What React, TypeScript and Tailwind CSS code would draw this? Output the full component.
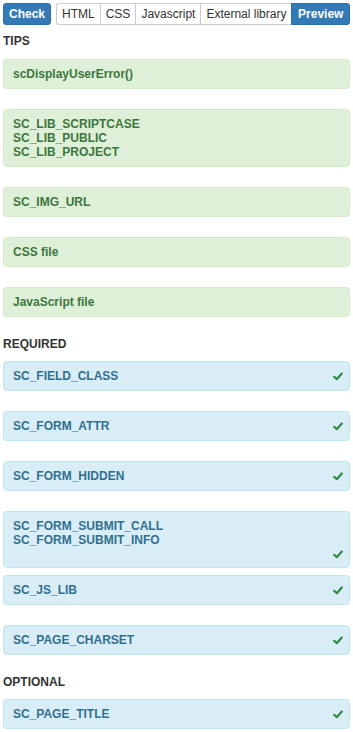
import React from "react";

const Check = () => (
  <svg width="10" height="9" viewBox="0 0 10 9" className="block shrink-0">
    <path d="M1.2 4.8 L3.8 7.2 L8.8 1.5" fill="none" stroke="#2f8a47" strokeWidth="2.2" strokeLinecap="round" strokeLinejoin="round" />
  </svg>
);

function GreenBox({ lines }: { lines: string[] }) {
  return (
    <div className="mb-[20px] rounded-[4px] border border-[#d6e9c6] bg-[#dff0d8] px-[9px] py-[7px] text-[12px] font-bold leading-[14px] text-[#3c763d]">
      {lines.map((l) => (
        <div key={l}>{l}</div>
      ))}
    </div>
  );
}

function BlueBox({ lines, checkOwnLine }: { lines: string[]; checkOwnLine?: boolean }) {
  return (
    <div
      className={
        "rounded-[4px] border border-[#bce8f1] bg-[#d9edf7] pl-[9px] pr-[6px] pt-[7px] text-[12px] font-bold leading-[14px] text-[#31708f] " +
        (checkOwnLine ? "mb-[7px] pb-[6px]" : "mb-[20px] pb-[7px]")
      }
    >
      {checkOwnLine ? (
        <>
          {lines.map((l) => (
            <div key={l}>{l}</div>
          ))}
          <div className="flex h-[14px] items-center justify-end">
            <Check />
          </div>
        </>
      ) : (
        <div className="flex h-[14px] items-center justify-between">
          <div>{lines[0]}</div>
          <Check />
        </div>
      )}
    </div>
  );
}

function Heading({ children, tight }: { children: React.ReactNode; tight?: boolean }) {
  return (
    <div className={"text-[12px] font-bold leading-[14px] text-[#333] " + (tight ? "mb-[10px]" : "mb-[11px]")}>
      {children}
    </div>
  );
}

export default function App() {
  const tabs = ["HTML", "CSS", "Javascript", "External library"];
  return (
    <div className="min-h-[732px] bg-white px-[3px] pt-[3px] text-[#333]" style={{ fontFamily: '"Liberation Sans", Arial, sans-serif' }}>
      <div className="flex items-center">
        <button className="h-[22px] rounded-[3px] border border-[#2e6da4] bg-[#337ab7] px-[5px] text-[12px] font-bold leading-[18px] text-white">
          Check
        </button>
        <div className="ml-[5px] flex h-[22px] flex-1">
          {tabs.map((t, i) => (
            <div
              key={t}
              className={
                "flex items-center border-y border-l border-[#ccc] bg-white px-[5px] text-[12px] leading-[18px] text-[#333] " +
                (i === 0 ? "rounded-l-[3px]" : "")
              }
            >
              {t}
            </div>
          ))}
          <div className="flex flex-1 items-center justify-center rounded-r-[3px] border border-[#2e6da4] bg-[#337ab7] px-[5px] text-[12px] font-bold leading-[18px] text-white">
            Preview
          </div>
        </div>
      </div>
      <div className="mt-[9px]">
        <Heading>TIPS</Heading>
        <GreenBox lines={["scDisplayUserError()"]} />
        <GreenBox lines={["SC_LIB_SCRIPTCASE", "SC_LIB_PUBLIC", "SC_LIB_PROJECT"]} />
        <GreenBox lines={["SC_IMG_URL"]} />
        <GreenBox lines={["CSS file"]} />
        <GreenBox lines={["JavaScript file"]} />
        <Heading tight>REQUIRED</Heading>
        <BlueBox lines={["SC_FIELD_CLASS"]} />
        <BlueBox lines={["SC_FORM_ATTR"]} />
        <BlueBox lines={["SC_FORM_HIDDEN"]} />
        <BlueBox lines={["SC_FORM_SUBMIT_CALL", "SC_FORM_SUBMIT_INFO"]} checkOwnLine />
        <BlueBox lines={["SC_JS_LIB"]} />
        <BlueBox lines={["SC_PAGE_CHARSET"]} />
        <Heading tight>OPTIONAL</Heading>
        <BlueBox lines={["SC_PAGE_TITLE"]} />
      </div>
    </div>
  );
}
